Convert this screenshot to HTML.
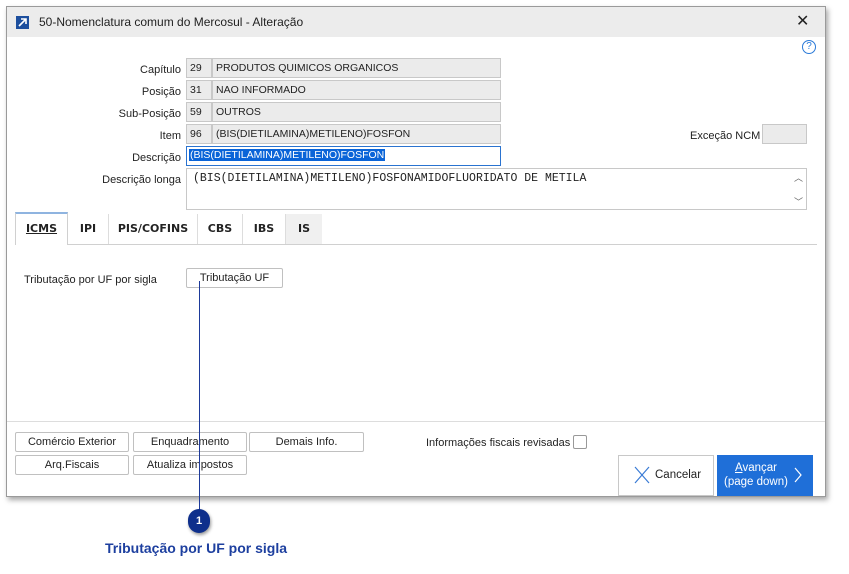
<!DOCTYPE html>
<html><head><meta charset="utf-8"><style>
*{box-sizing:border-box;margin:0;padding:0}
body{width:849px;height:574px;background:#fff;font-family:"Liberation Sans",sans-serif;font-size:11px;color:#222;position:relative;overflow:hidden}
.a{position:absolute}
.win{left:6px;top:6px;width:820px;height:491px;border:1px solid #9a9a9a;background:#fff;box-shadow:2px 3px 5px rgba(0,0,0,.35)}
.title{left:0;top:0;width:818px;height:30px;background:#ececec}
.lbl{text-align:right;width:120px;left:61px}
.f{background:#ebebeb;border:1px solid #c8c8c8;height:20px;padding:3px 3px;white-space:nowrap;font-size:10.5px}
.btn{border:1px solid #c0c0c0;background:#fff;text-align:center;height:20px;line-height:18px;border-radius:2px;font-size:11px}
.tab{top:214px;height:30px;line-height:30px;font-weight:bold;font-family:"DejaVu Sans",sans-serif;font-size:11px;text-align:center;border-right:1px solid #ddd}
</style></head><body>
<div class="a win">
 <div class="a title"></div>
 <div class="a" style="left:9px;top:9px;width:13px;height:13px;background:#1d4f9e"><svg width="13" height="13"><path d="M3 10L10 3M5 3H10V8" stroke="#fff" stroke-width="1.6" fill="none"/></svg></div>
 <div class="a" style="left:32px;top:8px;font-size:12px">50-Nomenclatura comum do Mercosul - Alteração</div>
 <div class="a" style="left:789px;top:4px;font-size:16px">✕</div>
 <div class="a" style="left:795px;top:33px;width:14px;height:14px;border:1px solid #2a7ad8;border-radius:50%;color:#2a7ad8;font-size:10px;text-align:center;line-height:12px">?</div>
</div>
<div class="a lbl" style="top:64px">Capítulo</div>
<div class="a f" style="left:186px;top:58px;width:26px">29</div><div class="a f" style="left:212px;top:58px;width:289px">PRODUTOS QUIMICOS ORGANICOS</div>
<div class="a lbl" style="top:86px">Posição</div>
<div class="a f" style="left:186px;top:80px;width:26px">31</div><div class="a f" style="left:212px;top:80px;width:289px">NAO INFORMADO</div>
<div class="a lbl" style="top:108px">Sub-Posição</div>
<div class="a f" style="left:186px;top:102px;width:26px">59</div><div class="a f" style="left:212px;top:102px;width:289px">OUTROS</div>
<div class="a lbl" style="top:130px">Item</div>
<div class="a f" style="left:186px;top:124px;width:26px">96</div><div class="a f" style="left:212px;top:124px;width:289px">(BIS(DIETILAMINA)METILENO)FOSFON</div>
<div class="a" style="left:690px;top:130px">Exceção NCM</div>
<div class="a f" style="left:762px;top:124px;width:45px"></div>
<div class="a lbl" style="top:152px">Descrição</div>
<div class="a" style="left:186px;top:146px;width:315px;height:20px;border:1px solid #2a73d0;padding:2px 2px"><span style="background:#0a64d8;color:#fff;font-size:10.5px;padding:0 1px">(BIS(DIETILAMINA)METILENO)FOSFON</span></div>
<div class="a lbl" style="top:174px">Descrição longa</div>
<div class="a" style="left:186px;top:168px;width:621px;height:42px;border:1px solid #c8c8c8;padding:3px 6px;font-family:'Liberation Mono',monospace;font-size:11.5px">(BIS(DIETILAMINA)METILENO)FOSFONAMIDOFLUORIDATO DE METILA</div>
<div class="a" style="left:794px;top:171px;font-size:9px;color:#666">︿</div>
<div class="a" style="left:794px;top:195px;font-size:9px;color:#666">﹀</div>
<div class="a" style="left:15px;top:244px;width:802px;border-top:1px solid #d0d0d0"></div>
<div class="a tab" style="left:15px;top:212px;height:33px;width:53px;border:1px solid #d0d0d0;border-top:2px solid #8fb4e0;border-bottom:none;background:#fff;text-decoration:underline">ICMS</div>
<div class="a tab" style="left:68px;width:41px">IPI</div>
<div class="a tab" style="left:109px;width:89px">PIS/COFINS</div>
<div class="a tab" style="left:198px;width:45px">CBS</div>
<div class="a tab" style="left:243px;width:43px">IBS</div>
<div class="a tab" style="left:286px;width:36px;background:#f0f0f0;border:none">IS</div>
<div class="a" style="left:24px;top:274px">Tributação por UF por sigla</div>
<div class="a btn" style="left:186px;top:268px;width:97px">Tributação UF</div>
<div class="a" style="left:7px;top:421px;width:818px;border-top:1px solid #ddd"></div>
<div class="a btn" style="left:15px;top:432px;width:114px">Comércio Exterior</div>
<div class="a btn" style="left:133px;top:432px;width:114px">Enquadramento</div>
<div class="a btn" style="left:249px;top:432px;width:115px">Demais Info.</div>
<div class="a btn" style="left:15px;top:455px;width:114px">Arq.Fiscais</div>
<div class="a btn" style="left:133px;top:455px;width:114px">Atualiza impostos</div>
<div class="a" style="left:426px;top:437px">Informações fiscais revisadas</div>
<div class="a" style="left:573px;top:435px;width:14px;height:14px;border:1px solid #999;border-radius:2px"></div>
<div class="a" style="left:618px;top:455px;width:96px;height:41px;border:1px solid #c8c8c8;background:#fff"></div>
<svg class="a" style="left:634px;top:466px" width="16" height="18"><path d="M1 1L15 17M15 1L1 17" stroke="#3a7bd5" stroke-width="1.2"/></svg>
<div class="a" style="left:655px;top:469px;font-size:11.5px">Cancelar</div>
<div class="a" style="left:717px;top:455px;width:96px;height:41px;background:#1f6fd8;color:#fff;font-size:11.5px;text-align:center;padding:6px 18px 0 0;line-height:14px"><u>A</u>vançar<br>(page down)</div>
<svg class="a" style="left:793px;top:467px" width="10" height="16"><path d="M2 1L8 8L2 15" stroke="#fff" stroke-width="1.2" fill="none"/></svg>
<div class="a" style="left:199px;top:281px;width:1px;height:230px;background:#1d3a9a"></div>
<div class="a" style="left:188px;top:509px;width:22px;height:24px;border-radius:11px;background:#0e2f8c;color:#fff;font-size:11px;font-weight:bold;text-align:center;line-height:24px;box-shadow:1px 2px 3px rgba(0,0,0,.4)">1</div>
<div class="a" style="left:105px;top:540px;font-size:14px;font-weight:bold;color:#1d3f9f">Tributação por UF por sigla</div>
</body></html>
